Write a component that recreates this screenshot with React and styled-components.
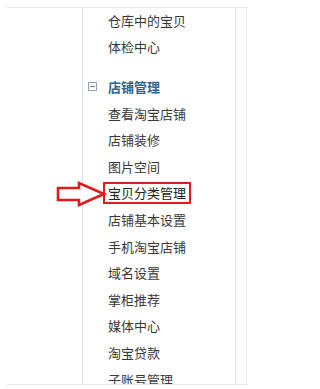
import React from "react";
import styled, { createGlobalStyle } from "styled-components";

const Global = createGlobalStyle`
  html, body {
    margin: 0;
    padding: 0;
    background: #fff;
  }
  body {
    font-family: "Noto Sans CJK SC", "Liberation Sans", sans-serif;
  }
`;

const Frame = styled.div`
  position: relative;
  margin: 7px 0 0 7px;
  width: 241px;
  height: 376px;
  border-top: 1px solid #e4e6e8;
  border-bottom: 1px solid #e4e6e8;
  display: flex;
  overflow: hidden;
`;

const Side = styled.div`
  width: 75px;
  border-right: 1px solid #dbe6ef;
`;

const Menu = styled.ul`
  list-style: none;
  margin: -1px 0 0;
  padding: 0 0 0 5px;
  width: 147px;
  border-right: 1px solid #dde7ef;
`;

const Item = styled.li`
  height: 26.6px;
  display: flex;
  align-items: center;
  padding-left: 20px;
  font-size: 13px;
  color: #383838;
  white-space: nowrap;
`;

const Header = styled.li`
  height: 26.6px;
  margin-top: 13px;
  display: flex;
  align-items: center;
  gap: 11px;
  font-size: 13px;
  font-weight: bold;
  color: #2d6592;
`;

const Toggle = styled.span`
  position: relative;
  width: 7px;
  height: 7px;
  border: 1px solid #8fa3b4;
  &::after {
    content: "";
    position: absolute;
    left: 1px;
    right: 1px;
    top: 3px;
    height: 1px;
    background: #6f8598;
  }
`;

const Marked = styled.span`
  margin-left: -5px;
  padding: 0 3px;
  line-height: 18px;
  border: 2px solid #e11b1b;
  color: #222;
`;

const Edge = styled.div`
  width: 10px;
  border-right: 1px solid #eef2f5;
`;

const Arrow = styled.svg`
  position: absolute;
  left: 43px;
  top: 167px;
`;

const top = ["仓库中的宝贝", "体检中心"];
const shop = [
  "查看淘宝店铺",
  "店铺装修",
  "图片空间",
  "宝贝分类管理",
  "店铺基本设置",
  "手机淘宝店铺",
  "域名设置",
  "掌柜推荐",
  "媒体中心",
  "淘宝贷款",
  "子账号管理",
];

export default function App() {
  return (
    <>
      <Global />
      <Frame>
        <Side />
        <Menu>
          {top.map((t) => (
            <Item key={t}>{t}</Item>
          ))}
          <Header>
            <Toggle />
            店铺管理
          </Header>
          {shop.map((t) =>
            t === "宝贝分类管理" ? (
              <Item key={t}>
                <Marked>{t}</Marked>
              </Item>
            ) : (
              <Item key={t}>{t}</Item>
            )
          )}
        </Menu>
        <Edge />
        <Arrow width="58" height="34" viewBox="0 0 58 34">
          <path
            d="M8 13 H29 V8 L54 19 L29 30 V25 H8 Z"
            fill="#fff"
            stroke="#e11b1b"
            strokeWidth="2.6"
            strokeLinejoin="miter"
          />
        </Arrow>
      </Frame>
    </>
  );
}
